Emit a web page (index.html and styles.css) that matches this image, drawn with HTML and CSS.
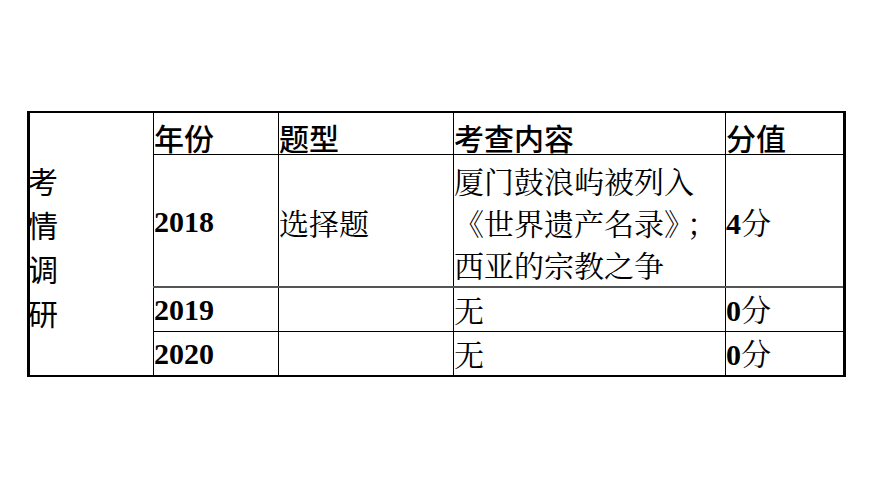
FILE: index.html
```html
<!DOCTYPE html>
<html lang="zh">
<head>
<meta charset="utf-8">
<link rel="stylesheet" href="styles.css">
</head>
<body>
<table class="grid">
  <colgroup>
    <col class="c1"><col class="c2"><col class="c3"><col class="c4"><col class="c5">
  </colgroup>
  <tr class="head">
    <td class="side" rowspan="4"><div class="side-text">考<br>情<br>调<br>研</div></td>
    <td class="hd">年份</td>
    <td class="hd">题型</td>
    <td class="hd">考查内容</td>
    <td class="hd">分值</td>
  </tr>
  <tr class="big">
    <td class="num">2018</td>
    <td class="txt">选择题</td>
    <td class="txt multi">厦门鼓浪屿被列入<br>《世界遗产名录》<span class="semi">；</span><br>西亚的宗教之争</td>
    <td class="txt"><span class="num">4</span>分</td>
  </tr>
  <tr class="small">
    <td class="num">2019</td>
    <td class="txt"></td>
    <td class="txt">无</td>
    <td class="txt"><span class="num">0</span>分</td>
  </tr>
  <tr class="small last">
    <td class="num">2020</td>
    <td class="txt"></td>
    <td class="txt">无</td>
    <td class="txt"><span class="num">0</span>分</td>
  </tr>
</table>
</body>
</html>
```

FILE: styles.css
```css
html, body {
  margin: 0;
  padding: 0;
  background: #ffffff;
}
body {
  padding: 111px 0 0 27px;
}
.grid {
  border-collapse: collapse;
  table-layout: fixed;
  width: 817px;
  border-left: 3px solid #000;
  border-top: 2px solid #000;
  border-right: 3px solid #000;
  border-bottom: 2px solid #000;
  font-family: "Noto Sans CJK SC", sans-serif;
  font-size: 30px;
  color: #000;
}
.c1 { width: 125px; }
.c2 { width: 125px; }
.c3 { width: 175px; }
.c4 { width: 272px; }
.c5 { width: 119px; }
.grid td {
  border: 1px solid #000;
  padding: 0;
  white-space: nowrap;
  vertical-align: middle;
  line-height: 41px;
}
.head td { height: 41px; }
.small td {
  height: 41px;
}
.big td {
  height: 128px;
  line-height: 42px;
  padding-top: 3px;
  border-bottom: 2px solid #555;
}
.grid .side {
  line-height: 44px;
  padding-top: 3px;
}
.side-text {
  margin-left: -2px;
}
.head .hd {
  font-weight: 500;
  height: 34px;
  line-height: 34px;
  padding-top: 7px;
}
.txt {
  font-family: "Noto Serif CJK SC", "Noto Sans CJK SC", serif;
  font-weight: 400;
}
.semi {
  margin-left: 8px;
}
.num {
  font-family: "Liberation Serif", serif;
  font-weight: 700;
}
```
